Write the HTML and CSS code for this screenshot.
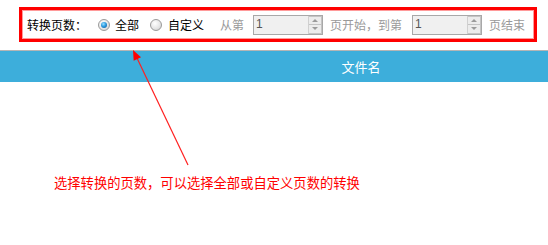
FILE: index.html
```html
<!DOCTYPE html>
<html lang="zh-CN">
<head>
<meta charset="utf-8">
<title>转换页数</title>
<link rel="stylesheet" href="styles.css">
</head>
<body>
<div class="page">
  <div class="toolbar">
    <span class="label">转换页数：</span>
    <span class="radio checked r1"></span>
    <span class="opt t1">全部</span>
    <span class="radio r2"></span>
    <span class="opt t2">自定义</span>
    <span class="dim from">从第</span>
    <div class="spin s1">
      <span class="val">1</span>
      <span class="btns"><span class="up"></span><span class="down"></span></span>
    </div>
    <span class="dim mid">页开始，到第</span>
    <div class="spin s2">
      <span class="val">1</span>
      <span class="btns"><span class="up"></span><span class="down"></span></span>
    </div>
    <span class="dim end">页结束</span>
  </div>
  <div class="header">
    <span></span>
    <span class="col">文件名</span>
  </div>
  <p class="note">选择转换的页数，可以选择全部或自定义页数的转换</p>
  <svg class="arrow" width="548" height="245" viewBox="0 0 548 245">
    <line x1="188" y1="165" x2="136.5" y2="57" stroke="#ff2020" stroke-width="1.2"/>
    <polygon points="133,50 141,57.3 133.7,60.7" fill="#ff0000"/>
  </svg>
</div>
</body>
</html>
```
FILE: styles.css
```css
html, body {
  margin: 0;
  padding: 0;
  background: #fff;
}
.page {
  position: relative;
  width: 548px;
  height: 245px;
  overflow: hidden;
  font-family: "Noto Sans CJK SC", "Noto Sans", sans-serif;
}
.toolbar {
  margin: 7px 11px 0 19px;
  height: 29px;
  border: 3px solid #ff0000;
  box-shadow: inset 0 0 0 1px #ff9a9a;
  display: flex;
  align-items: center;
  font-size: 12px;
  line-height: 14px;
}
.label { margin-left: 5px; color: #000; }
.opt { color: #000; }
.dim { color: #9a9a9a; }
.radio {
  box-sizing: border-box;
  width: 12px;
  height: 12px;
  border-radius: 50%;
  border: 1px solid #9a9a9a;
  background: radial-gradient(circle at 40% 35%, #ffffff 0%, #e6e6e6 55%, #c8c8c8 100%);
  display: flex;
  align-items: center;
  justify-content: center;
}
.radio.checked::after {
  content: "";
  width: 6px;
  height: 6px;
  border-radius: 50%;
  background: radial-gradient(circle at 40% 35%, #9be0ff 0%, #2c9be0 45%, #0b4f8f 100%);
}
.r1 { margin-left: 11px; }
.t1 { margin-left: 5px; }
.r2 { margin-left: 11px; }
.t2 { margin-left: 6px; }
.from { margin-left: 16px; }
.s1 { margin-left: 9px; }
.mid { margin-left: 7px; }
.s2 { margin-left: 10px; }
.end { margin-left: 7px; }
.spin {
  box-sizing: border-box;
  width: 70px;
  height: 20px;
  border: 1px solid #a8a8a8;
  background: #f0f0f0;
  display: flex;
  justify-content: space-between;
}
.val {
  font-family: "Liberation Sans", sans-serif;
  font-size: 12px;
  line-height: 17px;
  color: #555;
  padding-left: 2px;
}
.btns {
  width: 13px;
  display: flex;
  flex-direction: column;
  border-left: 1px solid #d0d0d0;
}
.up, .down {
  flex: 1;
  background: #ececec;
  border: 1px solid #c4c4c4;
  border-left: 0;
  position: relative;
}
.down { border-top: 0; }
.up::after, .down::after {
  content: "";
  position: absolute;
  left: 3px;
  top: 2px;
  border-left: 3px solid transparent;
  border-right: 3px solid transparent;
}
.up::after { border-bottom: 3px solid #9a9a9a; }
.down::after { border-top: 3px solid #9a9a9a; }
.header {
  margin-top: 8px;
  height: 31px;
  border-top: 1px solid #b5b5b5;
  background: #3daedb;
  display: grid;
  grid-template-columns: 174px 1fr;
  align-items: center;
}
.col {
  text-align: center;
  color: #fff;
  font-size: 13px;
}
.note {
  margin: 92px 0 0 54px;
  color: #ff0000;
  font-size: 13.3px;
  line-height: 18px;
}
.arrow {
  position: absolute;
  left: 0;
  top: 0;
  pointer-events: none;
}
```
